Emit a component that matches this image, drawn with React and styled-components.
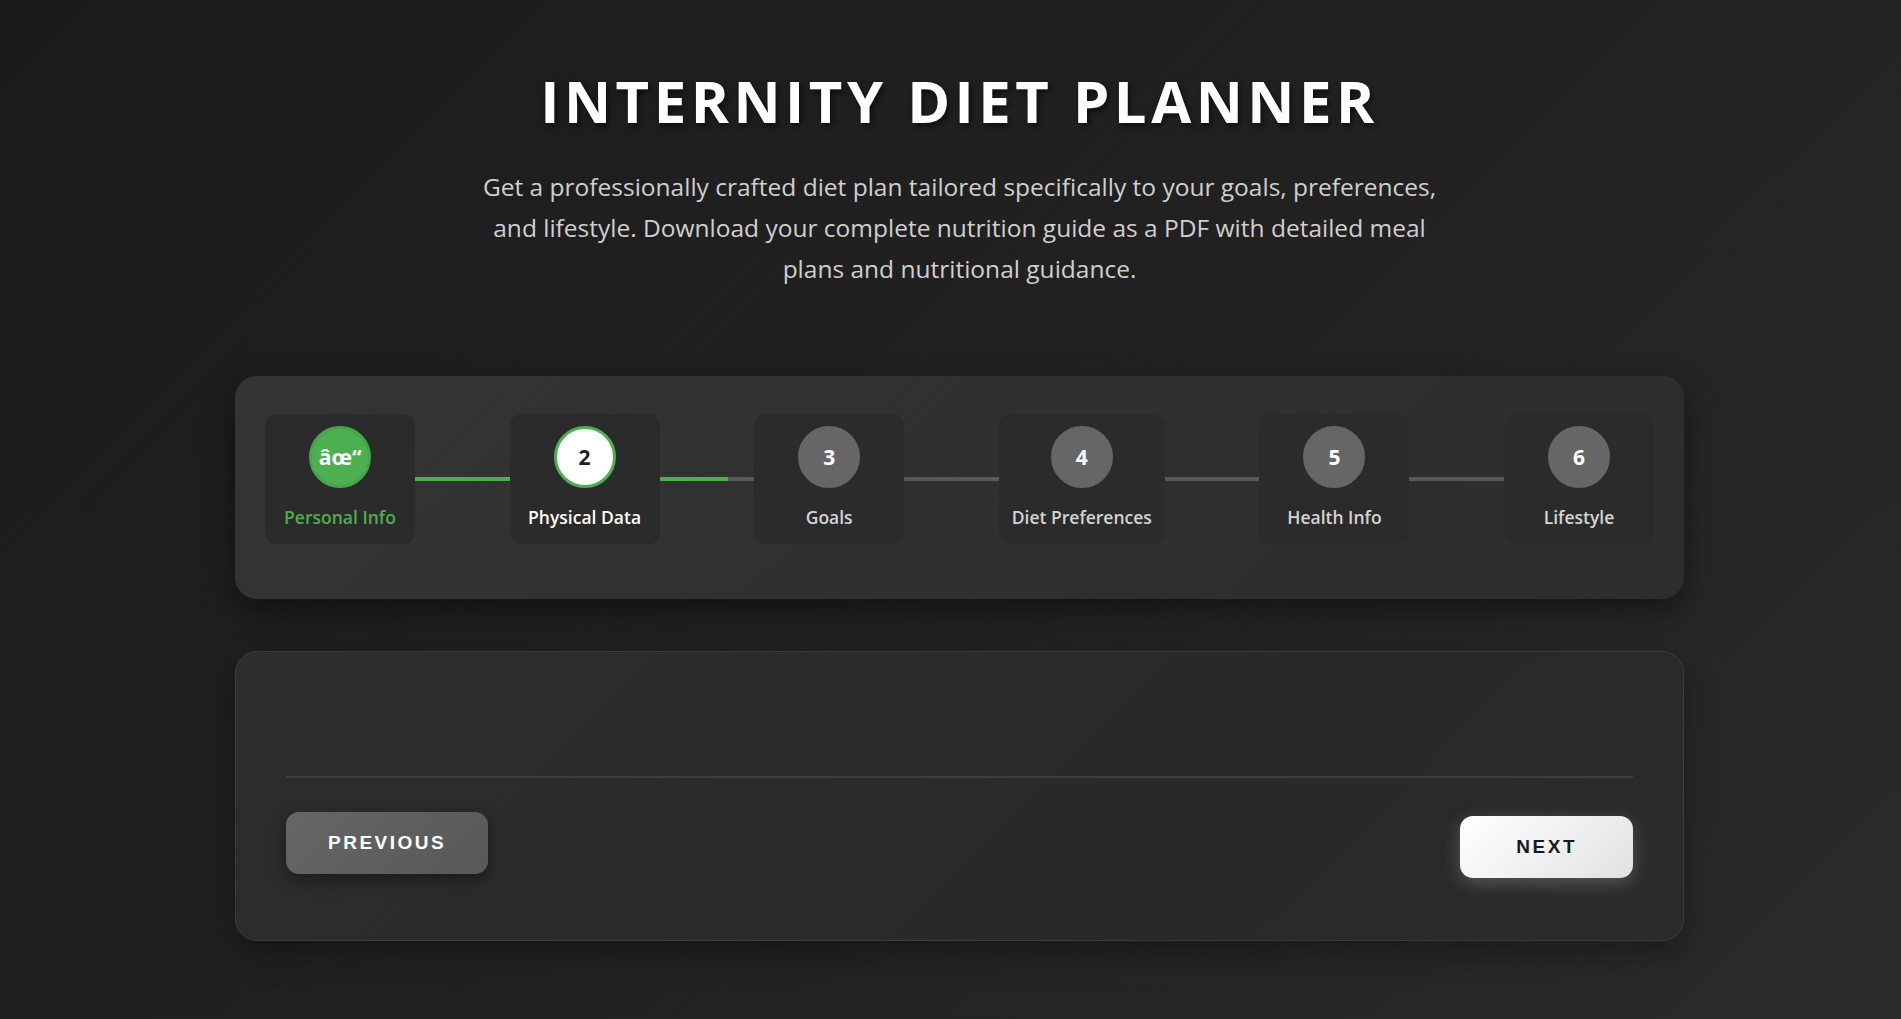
import styled, { createGlobalStyle } from "styled-components"

const GlobalStyle = createGlobalStyle`
  * { box-sizing: border-box; }
  html, body {
    margin: 0;
    padding: 0;
  }
  body {
    min-height: 100vh;
    background: linear-gradient(135deg, #1b1b1b 0%, #222222 55%, #2b2b2b 100%);
    font-family: "Open Sans", "Noto Sans", sans-serif;
    color: #fff;
  }
`

const steps = [
  { label: "Personal Info", status: "done" },
  { label: "Physical Data", status: "active" },
  { label: "Goals", status: "todo" },
  { label: "Diet Preferences", status: "todo" },
  { label: "Health Info", status: "todo" },
  { label: "Lifestyle", status: "todo" },
]

const fills = [100, 72, 0, 0, 0]

const App = () => {
  return (
    <>
      <GlobalStyle />
      <Page>
        <Header>
          <Title>INTERNITY DIET PLANNER</Title>
          <Subtitle>
            Get a professionally crafted diet plan tailored specifically to your goals, preferences,
            and lifestyle. Download your complete nutrition guide as a PDF with detailed meal plans
            and nutritional guidance.
          </Subtitle>
        </Header>

        <StepperCard>
          <Steps>
            {steps.map((step, i) => (
              <StepGroup key={step.label}>
                <Step>
                  <Circle $status={step.status}>
                    {step.status === "done" ? "âœ“" : i + 1}
                  </Circle>
                  <StepLabel $status={step.status}>{step.label}</StepLabel>
                </Step>
                {i < steps.length - 1 && (
                  <Connector>
                    <ConnectorFill style={{ width: `${fills[i]}%` }} />
                  </Connector>
                )}
              </StepGroup>
            ))}
          </Steps>
        </StepperCard>

        <FormCard>
          <FormBody />
          <NavRow>
            <NavButton $variant="prev">PREVIOUS</NavButton>
            <NavButton $variant="next">NEXT</NavButton>
          </NavRow>
        </FormCard>
      </Page>
    </>
  )
}

const StepGroup = styled.div`
  display: contents;
`

const Page = styled.main`
  width: 1449px;
  margin: 0 auto;
  padding: 66px 0 77px;
  position: relative;
  left: 9px;
`

const Header = styled.header`
  text-align: center;
`

const Title = styled.h1`
  margin: 0;
  font-size: 58px;
  line-height: 1.2;
  font-weight: 700;
  letter-spacing: 4.5px;
  color: #ffffff;
  text-shadow: 2px 3px 6px rgba(0, 0, 0, 0.6);
`

const Subtitle = styled.p`
  margin: 30px auto 0;
  max-width: 980px;
  font-size: 24.5px;
  line-height: 41px;
  color: #cfcfcf;
`

const StepperCard = styled.section`
  margin-top: 87px;
  padding: 38px 30px 55px;
  border-radius: 22px;
  background: linear-gradient(135deg, #343434 0%, #2f2f2f 60%, #2d2d2d 100%);
  box-shadow: 0 12px 32px rgba(0, 0, 0, 0.45);
`

const Steps = styled.div`
  display: flex;
  align-items: center;
`

const Step = styled.div`
  min-width: 150px;
  padding: 12px 13px 15px;
  display: flex;
  flex-direction: column;
  align-items: center;
  gap: 17px;
  border-radius: 12px;
  background: #2b2b2b;
`

const circleBg = { done: "#4caf50", active: "#ffffff", todo: "#666666" }
const circleBorder = { done: "#47a64b", active: "#4caf50", todo: "#666666" }
const labelColor = { done: "#4caf50", active: "#ffffff", todo: "#d4d4d4" }

const Circle = styled.div`
  width: 62px;
  height: 62px;
  border-radius: 50%;
  display: flex;
  align-items: center;
  justify-content: center;
  background: ${({ $status }) => circleBg[$status]};
  border: 3px solid ${({ $status }) => circleBorder[$status]};
  color: ${({ $status }) => ($status === "active" ? "#1f1f1f" : "#ffffff")};
  font-size: 21px;
  font-weight: 700;
`

const StepLabel = styled.span`
  font-size: 17.5px;
  line-height: 1.4;
  font-weight: 600;
  white-space: nowrap;
  color: ${({ $status }) => labelColor[$status]};
`

const Connector = styled.div`
  flex: 1;
  height: 4px;
  background: #585858;
`

const ConnectorFill = styled.div`
  height: 100%;
  background: #4caf50;
`

const FormCard = styled.section`
  margin-top: 52px;
  padding: 50px 50px 62px;
  border-radius: 22px;
  border: 1px solid #3c3c3c;
  background: linear-gradient(135deg, #2d2d2d 0%, #292929 60%, #2a2a2a 100%);
  box-shadow: 0 12px 32px rgba(0, 0, 0, 0.35);
`

const FormBody = styled.div`
  min-height: 74px;
`

const NavRow = styled.div`
  display: flex;
  justify-content: space-between;
  align-items: center;
  padding-top: 38px;
  border-top: 2px solid #3d3d3d;
`

const NavButton = styled.button`
  border: none;
  border-radius: 13px;
  font-family: "Liberation Sans", Arial, sans-serif;
  font-size: 19px;
  font-weight: 700;
  line-height: 22px;
  letter-spacing: 2.5px;
  cursor: pointer;
  padding: ${({ $variant }) => ($variant === "next" ? "20px 56px" : "20px 42px")};
  color: ${({ $variant }) => ($variant === "next" ? "#1a1a1a" : "#ffffff")};
  background: ${({ $variant }) =>
    $variant === "next"
      ? "linear-gradient(135deg, #ffffff 0%, #e2e2e2 100%)"
      : "linear-gradient(135deg, #666666 0%, #585858 100%)"};
  box-shadow: ${({ $variant }) =>
    $variant === "next"
      ? "0 5px 18px rgba(255, 255, 255, 0.22)"
      : "0 6px 16px rgba(0, 0, 0, 0.4)"};
  transform: ${({ $variant }) => ($variant === "prev" ? "translateY(-4px)" : "none")};
`

export default App
